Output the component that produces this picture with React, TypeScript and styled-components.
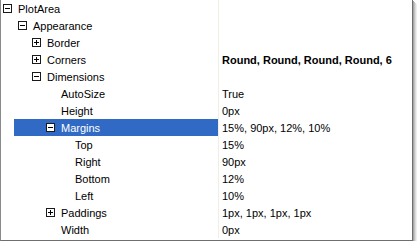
import React from "react";
import styled, { createGlobalStyle } from "styled-components";

const Global = createGlobalStyle`
  html, body { margin: 0; padding: 0; background: #ffffff; }
  body { font-family: "Liberation Sans", Arial, sans-serif; font-size: 11px; }
`;

type Node = {
  label: string;
  value?: string;
  level: number;
  toggle?: "plus" | "minus";
  selected?: boolean;
  bold?: boolean;
};

const rows: Node[] = [
  { label: "PlotArea", level: 0, toggle: "minus" },
  { label: "Appearance", level: 1, toggle: "minus" },
  { label: "Border", level: 2, toggle: "plus" },
  { label: "Corners", level: 2, toggle: "plus", value: "Round, Round, Round, Round, 6", bold: true },
  { label: "Dimensions", level: 2, toggle: "minus" },
  { label: "AutoSize", level: 3, value: "True" },
  { label: "Height", level: 3, value: "0px" },
  { label: "Margins", level: 3, toggle: "minus", selected: true, value: "15%, 90px, 12%, 10%" },
  { label: "Top", level: 4, value: "15%" },
  { label: "Right", level: 4, value: "90px" },
  { label: "Bottom", level: 4, value: "12%" },
  { label: "Left", level: 4, value: "10%" },
  { label: "Paddings", level: 3, toggle: "plus", value: "1px, 1px, 1px, 1px" },
  { label: "Width", level: 3, value: "0px" },
];

const textLeft = (level: number) => 17 + level * 14 + (level > 0 ? 1 : 0);

const Frame = styled.div`
  width: 411px;
  height: 240px;
  border-left: 1px solid #8a8a8a;
  border-right: 1px solid #6f6f6f;
  border-bottom: 1px solid #6f6f6f;
  box-shadow: 1px 1px 0 #a8a8a8, 2px 2px 0 #c4c4c4, 3px 3px 0 #dcdcdc, 4px 4px 0 #eeeeee;
  background: #ffffff;
  overflow: hidden;
  color: #000000;
  position: relative;
`;

const Grid = styled.div`
  display: flex;
  flex-direction: column;
`;

const Row = styled.div`
  display: grid;
  grid-template-columns: 217px 1px 1fr;
  height: 17px;
`;

const NameCell = styled.div<{ $indent: number; $selected?: boolean }>`
  position: relative;
  display: flex;
  align-items: center;
  height: 17px;
  padding-left: ${(p) => p.$indent}px;
  box-sizing: border-box;
  white-space: nowrap;
  color: ${(p) => (p.$selected ? "#ffffff" : "#000000")};
  background: ${(p) =>
    p.$selected ? "linear-gradient(to right, #ffffff 0, #ffffff 13px, #316ac5 13px)" : "transparent"};
`;

const Separator = styled.div`
  background: #f1efe2;
`;

const ValueCell = styled.div<{ $bold?: boolean }>`
  display: flex;
  align-items: center;
  padding-left: 3px;
  white-space: nowrap;
  font-weight: ${(p) => (p.$bold ? 700 : 400)};
`;

const ToggleBox = styled.span`
  position: absolute;
  top: 4px;
  width: 9px;
  height: 9px;
  box-sizing: border-box;
  border: 1px solid #1a1a1a;
  background: #ffffff;
  display: block;
`;

const Sign = styled.svg`
  position: absolute;
  left: 0;
  top: 0;
  display: block;
`;

function Toggle({ kind, left }: { kind: "plus" | "minus"; left: number }) {
  return (
    <ToggleBox style={{ left }}>
      <Sign width="7" height="7" viewBox="0 0 7 7">
        <rect x="1" y="3" width="5" height="1" fill="#000" />
        {kind === "plus" && <rect x="3" y="1" width="1" height="5" fill="#000" />}
      </Sign>
    </ToggleBox>
  );
}

export default function App() {
  return (
    <>
      <Global />
      <Frame>
        <Grid>
          {rows.map((r, i) => {
            const tl = textLeft(r.level);
            return (
              <Row key={i}>
                <NameCell $indent={tl} $selected={r.selected}>
                  {r.toggle && <Toggle kind={r.toggle} left={tl - 15} />}
                  {r.label}
                </NameCell>
                <Separator />
                <ValueCell $bold={r.bold}>{r.value ?? ""}</ValueCell>
              </Row>
            );
          })}
        </Grid>
      </Frame>
    </>
  );
}
